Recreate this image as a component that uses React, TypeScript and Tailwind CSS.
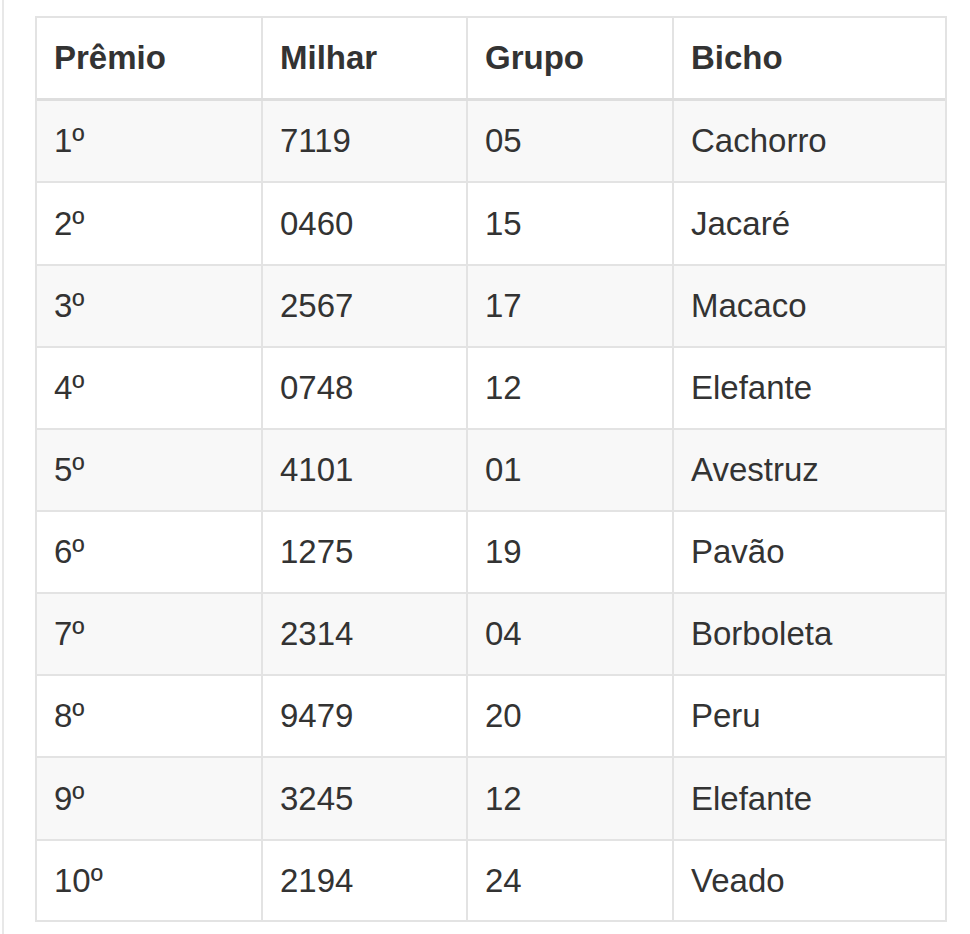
import React from "react";

const rows: [string, string, string, string][] = [
  ["1º", "7119", "05", "Cachorro"],
  ["2º", "0460", "15", "Jacaré"],
  ["3º", "2567", "17", "Macaco"],
  ["4º", "0748", "12", "Elefante"],
  ["5º", "4101", "01", "Avestruz"],
  ["6º", "1275", "19", "Pavão"],
  ["7º", "2314", "04", "Borboleta"],
  ["8º", "9479", "20", "Peru"],
  ["9º", "3245", "12", "Elefante"],
  ["10º", "2194", "24", "Veado"],
];

const heights = [
  "h-[82px]",
  "h-[83px]",
  "h-[82px]",
  "h-[82px]",
  "h-[82px]",
  "h-[82px]",
  "h-[82px]",
  "h-[82px]",
  "h-[83px]",
  "h-[79px]",
];

const grid = "grid grid-cols-[226px_205px_206px_271px]";
const cell = "flex items-center pl-[17px] border-r-2 border-[#e3e3e3]";
const lastCell = "flex items-center pl-[17px]";

export default function App() {
  return (
    <div
      className="min-h-[934px] bg-white pl-[2px] text-[#333]"
      style={{ fontFamily: '"Liberation Sans", Arial, sans-serif' }}
    >
      <div className="min-h-[934px] border-l-2 border-[#e8e8e8] pt-[16px] pl-[31px]">
        <div className="w-[912px] border-2 border-[#e3e3e3]">
          <div className={`${grid} h-[83px] border-b-[3px] border-[#dedede] text-[33px] font-bold`}>
            <div className={cell}>Prêmio</div>
            <div className={cell}>Milhar</div>
            <div className={cell}>Grupo</div>
            <div className={lastCell}>Bicho</div>
          </div>
          {rows.map((r, i) => (
            <div
              key={i}
              className={`${grid} text-[33px] ${heights[i]} ${
                i < rows.length - 1 ? "border-b-2 border-[#e3e3e3]" : ""
              } ${i % 2 === 0 ? "bg-[#f8f8f8]" : "bg-white"}`}
            >
              <div className={cell}>{r[0]}</div>
              <div className={cell}>{r[1]}</div>
              <div className={cell}>{r[2]}</div>
              <div className={lastCell}>{r[3]}</div>
            </div>
          ))}
        </div>
      </div>
    </div>
  );
}
